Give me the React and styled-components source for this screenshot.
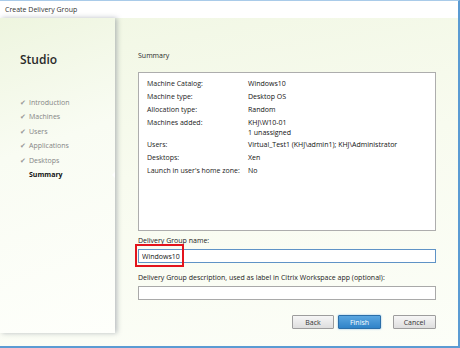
import React from 'react'
import styled, {createGlobalStyle} from 'styled-components'

const Global = createGlobalStyle`
	html, body {
		margin: 0;
		padding: 0;
		background: #fff;
	}
	body {
		font-family: 'Open Sans', 'Noto Sans', sans-serif;
		font-size: 7px;
		color: #1a1a1a;
	}
`

const Window = styled.div`
	width: 460px;
	height: 348px;
	box-sizing: border-box;
	display: flex;
	flex-direction: column;
	border-top: 1px solid #a9cbe9;
	border-right: 2px solid #5b9bd3;
	border-bottom: 2px solid #5b9bd3;
	overflow: hidden;
`
const TitleBar = styled.div`
	height: 17px;
	display: flex;
	align-items: center;
	padding-left: 5px;
	background: #fff;
	font-size: 7px;
	color: #333;
`
const Body = styled.div`
	flex: 1;
	display: flex;
	align-items: flex-start;
	background: linear-gradient(170deg, #f1f7e4 0%, #f8fbef 45%, #fcfef8 100%);
`
const Sidebar = styled.aside`
	width: 115px;
	height: 315px;
	flex-shrink: 0;
	position: relative;
	z-index: 1;
	box-sizing: border-box;
	padding: 34px 0 0 20px;
	background: linear-gradient(160deg, #eef5df 0%, #f9fcf3 40%, #fefffb 100%);
	box-shadow: 2px 0 5px rgba(80, 90, 110, 0.4);
`
const Brand = styled.h1`
	margin: 0 0 27px 0;
	font-size: 12px;
	font-weight: 600;
	color: #2a2a2a;
	line-height: 16px;
`
const Steps = styled.ul`
	list-style: none;
	margin: 0;
	padding: 0;
`
const Step = styled.li`
	position: relative;
	height: 14.5px;
	display: flex;
	align-items: center;
	gap: 2px;
	color: ${p => (p.$current ? '#111' : '#858585')};
	font-weight: ${p => (p.$current ? 700 : 400)};
	padding-left: ${p => (p.$current ? '9px' : '0')};
	&::after {
		content: '';
		display: ${p => (p.$current ? 'block' : 'none')};
		position: absolute;
		right: 0;
		top: 4px;
		border-style: solid;
		border-width: 3px 3px 3px 0;
		border-color: transparent #fff transparent transparent;
	}
`
const Check = styled.span`
	width: 7px;
	font-size: 7px;
	color: #999;
`
const Main = styled.main`
	flex: 1;
	padding: 32px 22px 0 23px;
	display: flex;
	flex-direction: column;
`
const Heading = styled.h2`
	margin: 0 0 10px 0;
	font-size: 7px;
	font-weight: 400;
	line-height: 12px;
	color: #2a2a2a;
`
const SummaryBox = styled.div`
	height: 159px;
	box-sizing: border-box;
	background: #fff;
	border: 1px solid #adadad;
	padding: 5px 8px;
	display: grid;
	grid-template-columns: 101px 1fr;
	grid-auto-rows: min-content;
	row-gap: 1px;
	align-content: start;
	line-height: 12px;
`
const Label = styled.div`
	color: #222;
`
const Value = styled.div`
	color: #111;
	line-height: ${p => (p.$multi ? '10px' : '12px')};
	padding-top: ${p => (p.$multi ? '1px' : '0')};
`
const FieldLabel = styled.label`
	display: block;
	margin-top: ${p => p.$top || '4px'};
	line-height: 12px;
	color: #222;
`
const InputWrap = styled.div`
	position: relative;
	margin-top: 2px;
`
const TextBox = styled.input`
	display: block;
	width: 100%;
	height: 14px;
	box-sizing: border-box;
	margin: 0;
	padding: 0 3px;
	font-family: inherit;
	font-size: 7px;
	color: #111;
	background: #fff;
	border: 1px solid ${p => (p.$focus ? '#5f93c6' : '#a9a9a9')};
	outline: none;
`
const Highlight = styled.div`
	position: absolute;
	left: -3px;
	top: -5px;
	width: 49px;
	height: 23px;
	box-sizing: border-box;
	border: 2px solid #e3141c;
	pointer-events: none;
`
const Buttons = styled.div`
	display: flex;
	justify-content: flex-end;
	margin-top: 15px;
`
const Button = styled.button`
	width: ${p => p.$w || '42px'};
	height: 14px;
	margin-left: ${p => p.$gap || '0'};
	padding: 0;
	font-family: inherit;
	font-size: 7px;
	color: ${p => (p.$primary ? '#fff' : '#333')};
	border: 1px solid ${p => (p.$primary ? '#2b6ea8' : '#9d9d9d')};
	border-radius: 1px;
	background: ${p =>
		p.$primary
			? 'linear-gradient(#5aa6e0, #2f83c8)'
			: 'linear-gradient(#f6f6f6, #dedede)'};
	box-shadow: ${p => (p.$primary ? '0 0 2px #7fb6e4' : 'none')};
`

const rows = [
	['Machine Catalog:', ['Windows10']],
	['Machine type:', ['Desktop OS']],
	['Allocation type:', ['Random']],
	['Machines added:', ['KHJ\\W10-01', '1 unassigned']],
	['Users:', ['Virtual_Test1 (KHJ\\admin1); KHJ\\Administrator']],
	['Desktops:', ['Xen']],
	["Launch in user's home zone:", ['No']],
]

const steps = ['Introduction', 'Machines', 'Users', 'Applications', 'Desktops']

export default function App() {
	return (
		<>
			<Global />
			<Window>
				<TitleBar>Create Delivery Group</TitleBar>
				<Body>
					<Sidebar>
						<Brand>Studio</Brand>
						<Steps>
							{steps.map(s => (
								<Step key={s}>
									<Check>✔</Check>
									<span>{s}</span>
								</Step>
							))}
							<Step $current>Summary</Step>
						</Steps>
					</Sidebar>
					<Main>
						<Heading>Summary</Heading>
						<SummaryBox>
							{rows.map(([label, values]) => (
								<React.Fragment key={label}>
									<Label>{label}</Label>
									<Value $multi={values.length > 1}>
										{values.map(v => (
											<div key={v}>{v}</div>
										))}
									</Value>
								</React.Fragment>
							))}
						</SummaryBox>
						<FieldLabel $top='4px'>Delivery Group name:</FieldLabel>
						<InputWrap>
							<TextBox $focus defaultValue='Windows10' />
							<Highlight />
						</InputWrap>
						<FieldLabel $top='9px'>
							Delivery Group description, used as label in Citrix Workspace app
							(optional):
						</FieldLabel>
						<InputWrap>
							<TextBox />
						</InputWrap>
						<Buttons>
							<Button $w='42px'>Back</Button>
							<Button $w='43px' $gap='4px' $primary>
								Finish
							</Button>
							<Button $w='43px' $gap='12px'>
								Cancel
							</Button>
						</Buttons>
					</Main>
				</Body>
			</Window>
		</>
	)
}
